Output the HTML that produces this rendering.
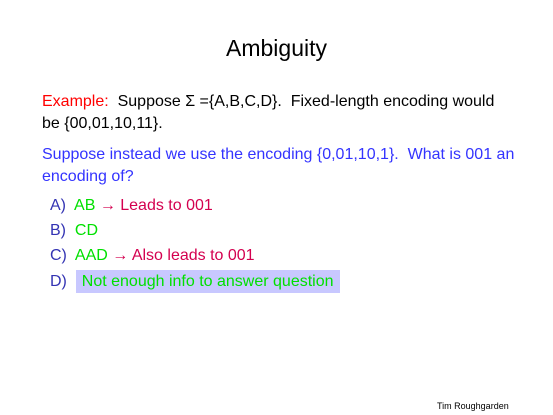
<!DOCTYPE html>
<html><head><style>
body{margin:0;width:553px;height:415px;background:#fff;font-family:"Liberation Sans",sans-serif;position:relative;overflow:hidden}
.a{position:absolute;white-space:nowrap;font-size:16px;line-height:1}
.t{position:absolute;left:0;width:553px;text-align:center;top:35px;font-size:23px}
.r{color:#f00}.b{color:#3333ff}.g{color:#00e000}.c{color:#d4004f}.l{color:#3333b3}
.hl{background:#c8c8ff;padding:3px 6px}
</style></head><body>
<div class="t">Ambiguity</div>
<div class="a" style="left:42px;top:94px"><span class="r">Example:</span>&nbsp; Suppose Σ ={A,B,C,D}.&nbsp; Fixed-length encoding would</div>
<div class="a" style="left:42px;top:116px">be {00,01,10,11}.</div>
<div class="a b" style="left:42px;top:147px">Suppose instead we use the encoding {0,01,10,1}.&nbsp; What is 001 an</div>
<div class="a b" style="left:42px;top:169px">encoding of?</div>
<div class="a" style="left:50px;top:198px"><span class="l">A)</span>&nbsp; <span class="g">AB</span> <span class="c">→ Leads to 001</span></div>
<div class="a" style="left:50px;top:223px"><span class="l">B)</span>&nbsp; <span class="g">CD</span></div>
<div class="a" style="left:50px;top:248px"><span class="l">C)</span>&nbsp; <span class="g">AAD</span> <span class="c">→ Also leads to 001</span></div>
<div class="a" style="left:50px;top:274px"><span class="l">D)</span>&nbsp; <span class="hl g">Not enough info to answer question</span></div>
<div class="a" style="left:437px;top:402px;font-size:9px">Tim Roughgarden</div>
</body></html>
